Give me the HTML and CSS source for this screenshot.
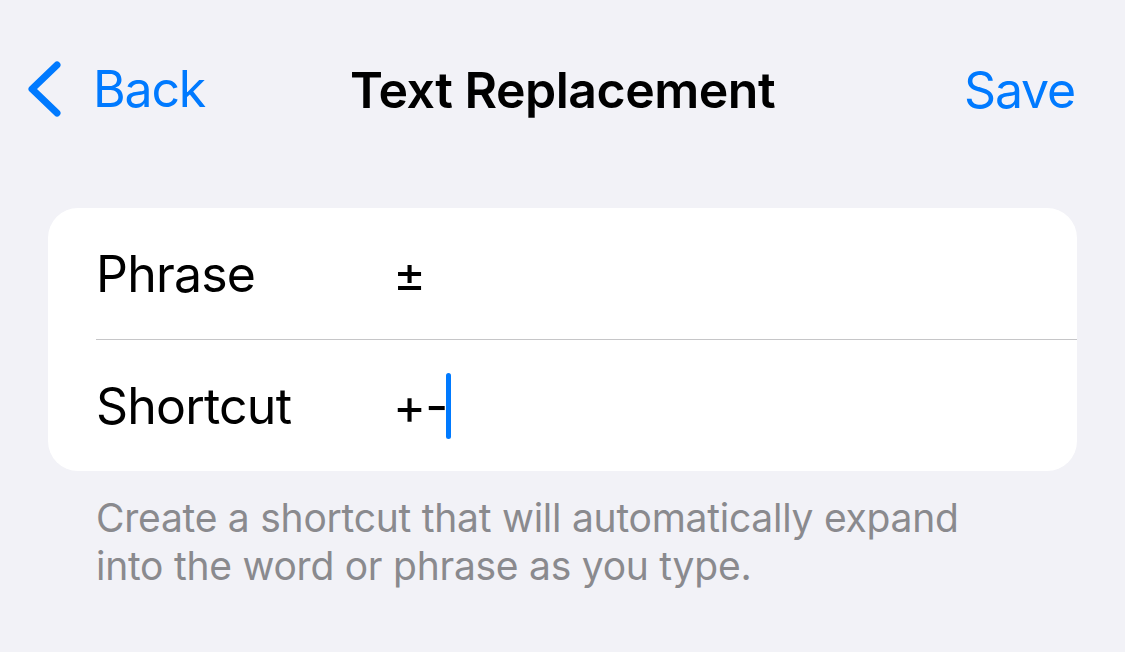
FILE: index.html
```html
<!doctype html>
<html lang="en">
<head>
    <meta charset="UTF-8">
    <meta name="viewport" content="width=device-width, initial-scale=1.0">
    <title>Text Replacement</title>
    <link rel="stylesheet" href="styles.css">
</head>
<body>

<div id="header">
    <a class="nav-back" href="javascript:;">
        <svg class="nav-chevron" width="40" height="60" viewBox="0 0 40 60">
            <polyline points="31,6 6,30 31,54" fill="none" stroke="#007AFF" stroke-width="7" stroke-linecap="round" stroke-linejoin="round"/>
        </svg>
        <span>Back</span>
    </a>
    <h1 class="nav-title">Text Replacement</h1>
    <a class="nav-save" href="javascript:;">Save</a>
</div>

<div id="main">
    <ul class="form-group">
        <li>
            <span class="label">Phrase</span>
            <span class="value">±</span>
        </li>
        <li>
            <span class="label">Shortcut</span>
            <span class="value">+-<em class="cursor"></em></span>
        </li>
    </ul>
    <p class="form-footer">Create a shortcut that will automatically expand<br>into the word or phrase as you type.</p>
</div>

</body>
</html>
```

FILE: styles.css
```css
*{
    margin: 0;
    padding: 0;
}
a{
    text-decoration: none;
}
ul{
    list-style: none;
}

body,html{
    width:100%;
    height:100%;
    overflow: hidden;
}
body{
    background-color: #F2F2F7;
    font-family: Inter, "Liberation Sans", sans-serif;
    color: #000;
}

#header{
    height: 180px;
    padding: 0 50px 0 26px;
    display: flex;
    align-items: center;
    justify-content: space-between;
    position: relative;
    letter-spacing: -0.5px;
}
.nav-back{
    display: flex;
    align-items: center;
    color: #007AFF;
    font-size: 50px;
    letter-spacing: -1.2px;
    margin-top: -2px;
}
.nav-chevron{
    margin-right: 27px;
}
.nav-title{
    position: absolute;
    left: 0;
    right: 0;
    text-align: center;
    font-size: 50px;
    font-weight: 600;
    pointer-events: none;
}
.nav-save{
    color: #007AFF;
    font-size: 50px;
    letter-spacing: -1.2px;
}

#main{
    padding: 28px 48px 0;
}

.form-group{
    background-color: #fff;
    border-radius: 30px;
    overflow: hidden;
}
.form-group li{
    height: 131px;
    margin-left: 48px;
    display: flex;
    align-items: center;
    font-size: 50px;
    letter-spacing: -0.8px;
}
.form-group li + li{
    border-top: 1px solid #C6C6C8;
}
.form-group .label{
    width: 297px;
}
.form-group .value{
    display: flex;
    align-items: center;
}
.form-group .cursor{
    display: block;
    width: 5px;
    height: 66px;
    border-radius: 3px;
    background-color: #007AFF;
    margin-left: -1px;
}

.form-footer{
    padding: 23px 48px 0;
    font-size: 39px;
    line-height: 48px;
    letter-spacing: -0.25px;
    color: #8A8A8E;
}
```
